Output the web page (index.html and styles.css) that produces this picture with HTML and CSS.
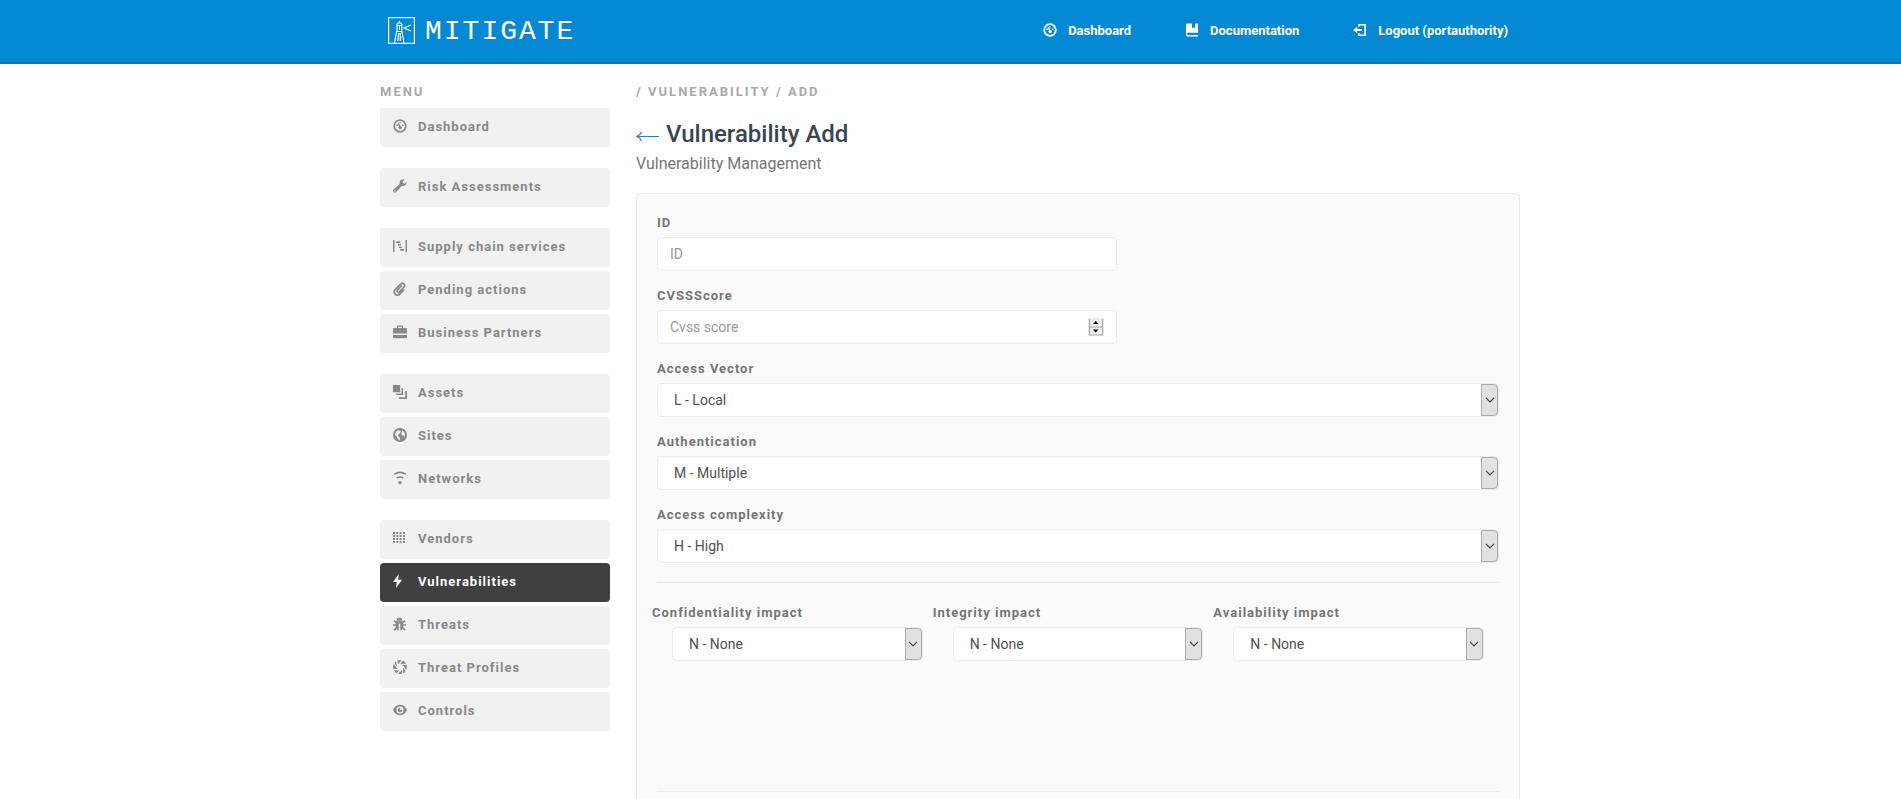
FILE: index.html
```html
<!DOCTYPE html>
<html lang="en">
<head>
<meta charset="utf-8">
<meta name="viewport" content="width=device-width, initial-scale=1">
<title>Mitigate - Vulnerability Add</title>
<link rel="stylesheet" href="styles.css">
</head>
<body>
<svg class="sprite" aria-hidden="true">
  <symbol id="i-dash" viewBox="0 0 14 14"><circle cx="7" cy="7" r="5.8" fill="none" stroke="currentColor" stroke-width="1.8"/><circle cx="4.2" cy="6.2" r=".9"/><circle cx="9.7" cy="6.2" r=".9"/><circle cx="7" cy="3.8" r=".8"/><circle cx="7.2" cy="8.6" r="1.7"/><path d="M4.6 4.3l.9-.5 2.6 4.4-1.4.8z"/></symbol>
  <symbol id="i-book" viewBox="0 0 14 14"><path d="M2.2.5H7v5l1.6-1.3L10.200 5.500V.5H13v9.300H3.200a1 1 0 0 0 0 2.200H13v1.500H2.800A2 2 0 0 1 1 11.500V1.800A1.300 1.300 0 0 1 2.200.5z"/></symbol>
  <symbol id="i-logout" viewBox="0 0 14 14"><path d="M5 3.800V1h8v12H5v-2.800h1.700v1.200h4.600V2.600H6.700v1.200z"/><path d="M.2 7l4-3.200v2.300H9v1.800H4.200v2.300z"/></symbol>
  <symbol id="i-wrench" viewBox="0 0 14 14"><path d="M13.800 3.300l-2.300 1.500-1.900-1.200.1-1.400L11.800.7C9.500-.2 7 .8 6.600 3.200c-.1.700 0 1.300.2 1.900L.7 10.400c-1.800 1.700.7 4.400 2.500 2.700l5.400-6c2.700.5 5.100-1.200 5.200-3.800zM1.900 12.600a.7.700 0 1 1 0-1.400.7.7 0 0 1 0 1.400z"/></symbol>
  <symbol id="i-chain" viewBox="0 0 14 14"><path d="M0 1h1.500v12H0zM12.500 1H14v12h-1.500zM3.200 2.300h4v1.700h-4zM5 4.900h3v1.600H5zM6 7.400h2.800V9H6zM7.200 10h3.800v1.700H7.200z"/></symbol>
  <symbol id="i-clip" viewBox="0 0 14 14"><path d="M8.200 4.200L4.600 7.900c-1.300 1.500.5 3.200 1.900 1.900l4.300-4.500c2.200-2.600-.9-5.400-3.300-3.200L2.200 7.500c-3 3.600 1.300 7.500 4.600 4.500l3.800-3.900" fill="none" stroke="currentColor" stroke-width="1.700" stroke-linecap="round"/></symbol>
  <symbol id="i-case" viewBox="0 0 14 14"><path d="M4 3V1.500Q4 .5 5 .5h4q1 0 1 1V3h3q1 0 1 1v4.500H0V4q0-1 1-1zm1.300 0h3.400V1.800H5.300zM0 10h14v2.500q0 .8-.8.800H.8q-.8 0-.8-.8z"/></symbol>
  <symbol id="i-layers" viewBox="0 0 14 14"><path d="M0 0h7.200v7.200H0zM8.500 3.200H10V10H3.200V8.500h5.300zM12.200 6H14v8H6v-1.800h6.200z"/></symbol>
  <symbol id="i-globe" viewBox="0 0 14 14"><path fill-rule="evenodd" d="M7 0a7 7 0 1 1 0 14A7 7 0 0 1 7 0zM5.300 2.200C3 3 1.900 5 2 7.200l1.800 1.300.9 2.600 2 1.100.3-2.200L5.800 8.600 4.700 7.300l1.800-1.600L8 3.200zM9.300 2.500L8.200 5.200l1 2.400 2.200.5-.7 2.300c2-2.500 1.500-6.300-1.400-7.900z"/></symbol>
  <symbol id="i-wifi" viewBox="0 0 14 14"><path d="M1 3.300Q7-.6 13 3.300M3.600 7Q7 5 10.300 7" fill="none" stroke="currentColor" stroke-width="1.600"/><circle cx="7" cy="11.800" r="1.700"/></symbol>
  <symbol id="i-grid" viewBox="0 0 14 14"><path d="M0 2h12M0 5h12M0 8h12M0 11h12" fill="none" stroke="currentColor" stroke-width="2" stroke-dasharray="2 1.300"/></symbol>
  <symbol id="i-bolt" viewBox="0 0 14 14"><path d="M5.800 0L0 8h3.800L3 14l6-8.300H5.200z"/></symbol>
  <symbol id="i-bug" viewBox="0 0 14 14"><path d="M3.500 3.800a3 3 0 0 1 6 0z"/><path d="M3 4.200h7q1 4.500-.8 8.500L7.300 13.500V6.500H5.700v7l-1.900-.8Q2 8.700 3 4.200z"/><path d="M.8 3.600l2.700 2M12.200 3.600l-2.700 2M0 8h3.500M13 8H9.500M1 13.300l2.800-3.100M12 13.300l-2.800-3.100" fill="none" stroke="currentColor" stroke-width="1.700"/></symbol>
  <symbol id="i-shutter" viewBox="0 0 14 14"><path d="M4.200.6A7 7 0 0 1 8.500.2L5.200 4.300zM9.800.6a7 7 0 0 1 3.300 3.200L7.200 3.700zM13.600 5a7 7 0 0 1-.3 4.800L9.800 4.900zM12.500 11a7 7 0 0 1-2.800 2.400L10 7.200zM8.700 13.800a7 7 0 0 1-3.800-.2l4.200-3.700zM3.700 13.100A7 7 0 0 1 .9 10.300l5.700.1zM.4 9a7 7 0 0 1 .4-5.100l3.600 5zM1.500 2.800A7 7 0 0 1 3 1.300L4 7z"/></symbol>
  <symbol id="i-eye" viewBox="0 0 14 14"><path fill-rule="evenodd" d="M7 1.800c3.300 0 5.800 2.300 7 5.200-1.200 2.900-3.700 5.200-7 5.200S1.200 9.900 0 7c1.200-2.900 3.700-5.200 7-5.200zm0 1.600a3.600 3.600 0 1 0 0 7.200 3.600 3.600 0 0 0 0-7.200z"/><path d="M7 4.800A2.200 2.200 0 1 0 9.200 7H7.300z"/></symbol>
  <symbol id="i-chevron" viewBox="0 0 10 6"><path d="M1 .8l4 4 4-4" fill="none" stroke="currentColor" stroke-width="1.200"/></symbol>
</svg>

<header class="topbar">
  <div class="container topbar-inner">
    <a class="brand" href="#">
      <svg class="brand-mark" viewBox="0 0 27 27" fill="none" stroke="currentColor" aria-hidden="true"><rect x=".6" y=".6" width="25.800" height="25.800" stroke-width="1.200"/><path d="M8 14.500h6.500M9 14V8.500h4.800V14M8.500 8.500l1-2 1.900-1 1.900 1 1 2M11.400 5.500V4M8.500 15L6.500 26M14 15l2 11M10.800 16L9.800 24M12.300 16v8" stroke-width="1.200"/><path d="M23 8l-7 3 7 3" stroke-width="1.200"/><path d="M11.500 9v4"/></svg>
      <span class="brand-name">MITIGATE</span>
    </a>
    <nav class="topnav" aria-label="Account">
      <a href="#"><svg class="icon"><use href="#i-dash"/></svg>Dashboard</a>
      <a href="#"><svg class="icon"><use href="#i-book"/></svg>Documentation</a>
      <a href="#"><svg class="icon"><use href="#i-logout"/></svg>Logout (portauthority)</a>
    </nav>
  </div>
</header>

<div class="container layout">
  <nav class="sidebar" aria-label="Menu">
    <h2 class="eyebrow">MENU</h2>
    <ul class="menu">
      <li><a href="#"><svg class="icon"><use href="#i-dash"/></svg>Dashboard</a></li>
    </ul>
    <ul class="menu">
      <li><a href="#"><svg class="icon"><use href="#i-wrench"/></svg>Risk Assessments</a></li>
    </ul>
    <ul class="menu">
      <li><a href="#"><svg class="icon"><use href="#i-chain"/></svg>Supply chain services</a></li>
      <li><a href="#"><svg class="icon"><use href="#i-clip"/></svg>Pending actions</a></li>
      <li><a href="#"><svg class="icon"><use href="#i-case"/></svg>Business Partners</a></li>
    </ul>
    <ul class="menu">
      <li><a href="#"><svg class="icon"><use href="#i-layers"/></svg>Assets</a></li>
      <li><a href="#"><svg class="icon"><use href="#i-globe"/></svg>Sites</a></li>
      <li><a href="#"><svg class="icon"><use href="#i-wifi"/></svg>Networks</a></li>
    </ul>
    <ul class="menu">
      <li><a href="#"><svg class="icon"><use href="#i-grid"/></svg>Vendors</a></li>
      <li><a class="active" href="#" aria-current="page"><svg class="icon"><use href="#i-bolt"/></svg>Vulnerabilities</a></li>
      <li><a href="#"><svg class="icon"><use href="#i-bug"/></svg>Threats</a></li>
      <li><a href="#"><svg class="icon"><use href="#i-shutter"/></svg>Threat Profiles</a></li>
      <li><a href="#"><svg class="icon"><use href="#i-eye"/></svg>Controls</a></li>
    </ul>
  </nav>

  <main class="content">
    <p class="eyebrow">/ VULNERABILITY / ADD</p>
    <h1 class="title">
      <a class="back" href="#" aria-label="Back"><svg viewBox="0 0 23 11" aria-hidden="true"><path d="M.8 5.500H23M5.500 1Q4 4.300.8 5.500 4 6.700 5.500 10" fill="none" stroke="currentColor" stroke-width="1.200"/></svg></a>
      Vulnerability Add
    </h1>
    <p class="subtitle">Vulnerability Management</p>

    <form class="panel">
      <div class="field">
        <label for="vid">ID</label>
        <input class="control short" id="vid" type="text" placeholder="ID">
      </div>
      <div class="field">
        <label for="cvss">CVSSScore</label>
        <div class="short number">
          <input class="control" id="cvss" type="number" placeholder="Cvss score">
          <svg class="spinner" viewBox="0 0 16 18" aria-hidden="true"><path d="M0 0h16v18H0z" fill="#eee"/><path d="M1.500 1v16h13V1M1.500 9h13" fill="none" stroke="#ababab" stroke-width="1.200"/><path d="M5 6h5.500L7.700 3zM5 11.500h5.500l-2.800 3z"/></svg>
        </div>
      </div>
      <div class="field">
        <label for="av">Access Vector</label>
        <div class="select"><select class="control" id="av"><option>L - Local</option></select><span class="drop"><svg><use href="#i-chevron"/></svg></span></div>
      </div>
      <div class="field">
        <label for="auth">Authentication</label>
        <div class="select"><select class="control" id="auth"><option>M - Multiple</option></select><span class="drop"><svg><use href="#i-chevron"/></svg></span></div>
      </div>
      <div class="field">
        <label for="ac">Access complexity</label>
        <div class="select"><select class="control" id="ac"><option>H - High</option></select><span class="drop"><svg><use href="#i-chevron"/></svg></span></div>
      </div>
      <hr>
      <div class="impacts">
        <div class="impact">
          <label for="ci">Confidentiality impact</label>
          <div class="select"><select class="control" id="ci"><option>N - None</option></select><span class="drop"><svg><use href="#i-chevron"/></svg></span></div>
        </div>
        <div class="impact">
          <label for="ii">Integrity impact</label>
          <div class="select"><select class="control" id="ii"><option>N - None</option></select><span class="drop"><svg><use href="#i-chevron"/></svg></span></div>
        </div>
        <div class="impact">
          <label for="ai">Availability impact</label>
          <div class="select"><select class="control" id="ai"><option>N - None</option></select><span class="drop"><svg><use href="#i-chevron"/></svg></span></div>
        </div>
      </div>
      <hr>
    </form>
  </main>
</div>
</body>
</html>
```
FILE: styles.css
```css
* { box-sizing: border-box; }
html { scrollbar-width: none; }
body {
  margin: 0;
  background: #fff;
  color: #6f6f6f;
  font: 14px/20px Roboto, "Liberation Sans", sans-serif;
}
a { color: inherit; text-decoration: none; }
.sprite { display: none; }
.icon { width: 14px; height: 14px; flex: none; fill: currentColor; }
.container { max-width: 1171px; margin: 0 auto; padding: 0 16px 0 15px; }

.topbar { background: #0389d3; border-bottom: 2px solid #0277bd; color: #fff; }
.topbar-inner { display: flex; justify-content: space-between; align-items: center; height: 62px; padding-bottom: 2px; }
.brand { display: flex; align-items: center; gap: 10px; padding-left: 8px; }
.brand-mark { width: 27px; height: 27px; }
.brand-name { padding-top: 4px; font: 28px/28px "Liberation Mono", monospace; letter-spacing: 2px; }
.topnav { display: flex; gap: 54px; padding: 1px 12px 0 0; font-size: 13px; font-weight: 700; }
.topnav a { display: flex; align-items: center; gap: 11px; }
.topnav .icon { margin-bottom: 2px; }

.layout { display: flex; gap: 26px; padding-top: 18px; }
.sidebar { flex: 0 0 230px; }
.content { flex: 1; min-width: 0; }
.eyebrow {
  margin: 0;
  color: #a9a9a9;
  font-size: 13px;
  line-height: 20px;
  font-weight: 700;
  letter-spacing: 2px;
}
.menu { list-style: none; margin: 0 0 21px; padding: 0; display: grid; gap: 4px; }
.eyebrow + .menu { margin-top: 6px; }
.menu a {
  display: flex;
  align-items: center;
  gap: 11px;
  padding: 9px 13px 10px;
  border-radius: 4px;
  background: #f1f1f1;
  color: #888;
  font-size: 13px;
  font-weight: 700;
  letter-spacing: 1px;
}
.menu .icon { margin-bottom: 2px; }
.menu .active { background: #404040; color: #fff; }

.title {
  display: flex;
  align-items: center;
  gap: 7px;
  margin: 16px 0 0;
  color: #37474f;
  font-size: 24px;
  line-height: 32px;
  font-weight: 500;
}
.back { display: flex; padding-top: 5px; color: #337ab7; }
.back svg { width: 23px; height: 11px; }
.subtitle { margin: 4px 0 19px; font-size: 16px; line-height: 20px; color: #757575; }

.panel {
  padding: 19px 20px 40px;
  border: 1px solid #ebebeb;
  border-radius: 4px;
  background: #fafafa;
}
label { display: block; margin-bottom: 4px; font-size: 13px; font-weight: 700; letter-spacing: 1px; color: #757575; }
.field { margin-bottom: 15px; }
.control {
  display: block;
  width: 100%;
  height: 34px;
  padding: 0 12px;
  border: 1px solid #ebebeb;
  border-radius: 4px;
  background: #fff;
  color: #505050;
  font: inherit;
  appearance: none;
}
.control::placeholder { color: #999; opacity: 1; }
.short { max-width: 460px; }
.number, .select { position: relative; }
.number .control { appearance: textfield; }
.spinner { position: absolute; right: 13px; top: 8px; width: 16px; height: 18px; }
select.control { padding: 0 16px; }
.drop {
  position: absolute;
  top: 1px;
  right: 1px;
  bottom: 1px;
  width: 17px;
  display: grid;
  place-items: center;
  border: 1px solid #ababab;
  border-radius: 0 4px 4px 0;
  background: #e1e1e1;
  color: #444;
  pointer-events: none;
}
.drop svg { width: 10px; height: 6px; }
hr { margin: 0; border: 0; border-top: 1px solid #ebebeb; }
.field + hr { margin-top: 19px; }
.impacts { display: grid; grid-template-columns: repeat(3, 1fr); padding: 20px 0 130px; }
.impact { padding: 0 15px; }
.impact label { margin-left: -20px; }
```
